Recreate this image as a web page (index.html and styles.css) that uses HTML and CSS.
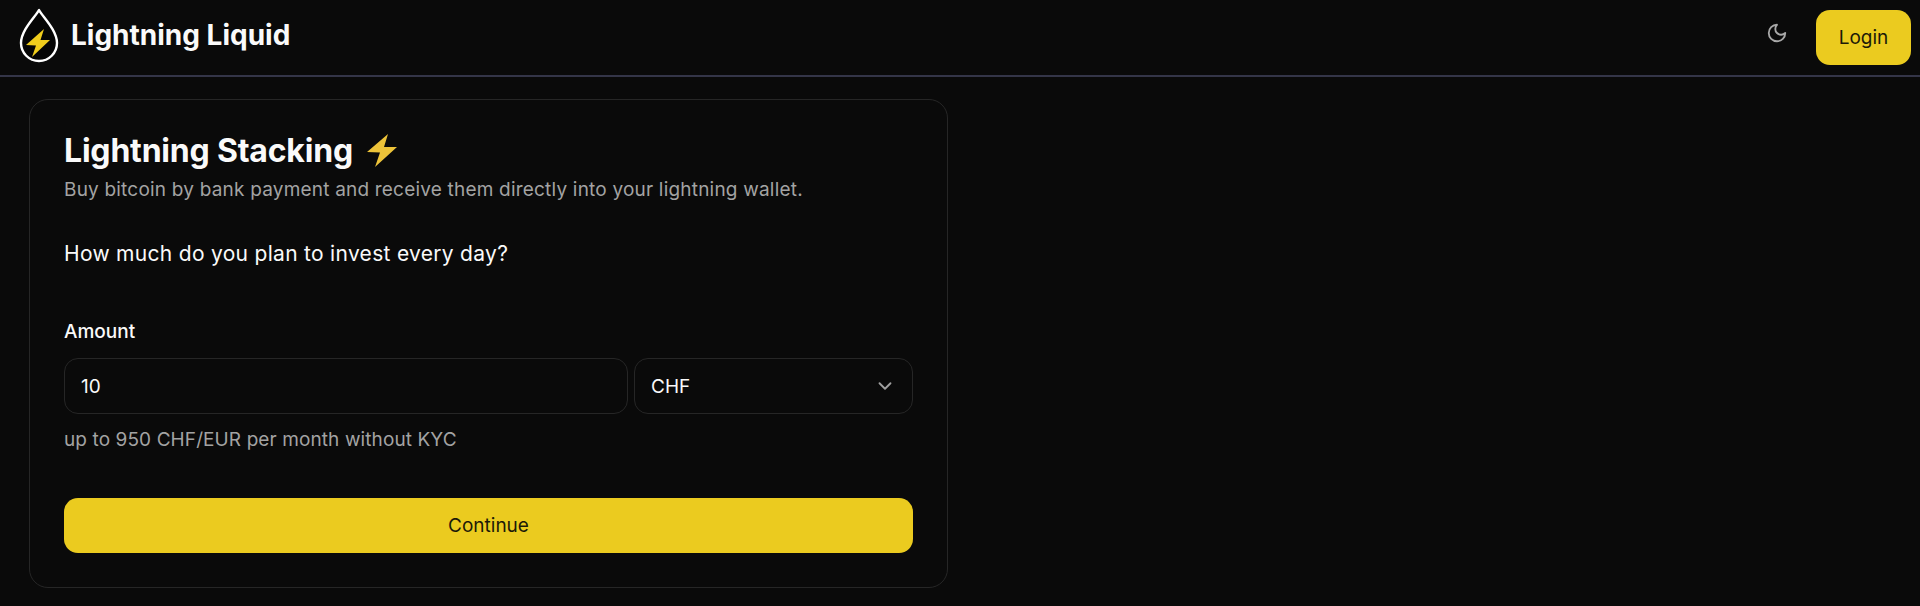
FILE: index.html
```html
<!DOCTYPE html>
<html>

<head>
    <title>Lightning Liquid</title>
    <link rel="stylesheet" href="styles.css">
</head>

<body>
    <header class="topbar">
        <div class="brand">
            <svg class="brand-logo" width="40" height="56" viewBox="0 0 40 56">
                <path d="M20 3 C17 9 2 23 2 36 A18 18 0 0 0 38 36 C38 23 23 9 20 3 Z" fill="#050505" stroke="#fff" stroke-width="2.4" stroke-linejoin="round"/>
                <path d="M25 22 L7 38 L17 38.500 L13 50 L31 33 L21.500 33 Z" fill="#f0cd1c"/>
            </svg>
            <span class="brand-name">Lightning Liquid</span>
        </div>
        <div class="actions">
            <svg class="moon" width="22" height="22" viewBox="0 0 24 24" fill="none" stroke="#a8a8a8" stroke-width="2" stroke-linecap="round" stroke-linejoin="round">
                <path d="M12 3a6 6 0 0 0 9 9 9 9 0 1 1-9-9Z"/>
            </svg>
            <button class="btn login">Login</button>
        </div>
    </header>

    <main class="card">
        <h1 class="card-title">Lightning Stacking
            <svg class="bolt" width="34" height="33" viewBox="0 0 34 33">
                <path d="M23 0 L2 18 L15 18.500 L10 33 L32 13 L19 13 Z" fill="#edc339"/>
            </svg>
        </h1>
        <p class="card-desc">Buy bitcoin by bank payment and receive them directly into your lightning wallet.</p>
        <p class="question">How much do you plan to invest every day?</p>
        <label class="field-label">Amount</label>
        <div class="field-row">
            <div class="input amount">10</div>
            <div class="input currency">
                <span>CHF</span>
                <svg width="22" height="22" viewBox="0 0 24 24" fill="none" stroke="#a0a0a0" stroke-width="2" stroke-linecap="round" stroke-linejoin="round">
                    <path d="m6 9 6 6 6-6"/>
                </svg>
            </div>
        </div>
        <p class="hint">up to 950 CHF/EUR per month without KYC</p>
        <button class="btn continue">Continue</button>
    </main>
</body>

</html>
```

FILE: styles.css
```css
* {
    box-sizing: border-box;
}

html,
body {
    height: 100%;
}

body {
    margin: 0;
    background-color: #0a0a0a;
    color: #fafafa;
    font-family: "Inter", "Liberation Sans", sans-serif;
    overflow: hidden;
}

.topbar {
    height: 77px;
    padding: 6px 9px 11px 19px;
    display: flex;
    align-items: center;
    justify-content: space-between;
    border-bottom: 2px solid #343548;
}

.brand {
    display: flex;
    align-items: center;
    gap: 12px;
}

.brand-name {
    font-size: 28px;
    font-weight: 700;
}

.actions {
    display: flex;
    align-items: center;
    gap: 28px;
}

.moon {
    margin-bottom: 4px;
}

.btn {
    border: 0;
    background-color: #ebcb1f;
    color: #1c1a08;
    font-family: inherit;
    font-weight: 400;
    font-size: 19px;
}

.login {
    width: 95px;
    height: 55px;
    margin-top: 4px;
    border-radius: 14px;
}

.card {
    width: 919px;
    height: 489px;
    margin: 22px 0 0 29px;
    padding: 29px 34px;
    border: 1px solid #262626;
    border-radius: 19px;
}

.card-title {
    margin: 0;
    display: flex;
    align-items: center;
    gap: 12px;
    height: 43px;
    font-size: 32px;
    font-weight: 650;
    letter-spacing: -0.2px;
}

.card-desc {
    margin: 5px 0 0;
    font-size: 19px;
    letter-spacing: 0.2px;
    line-height: 26px;
    color: #a3a3a3;
}

.question {
    margin: 36px 0 0;
    font-size: 21px;
    letter-spacing: 0.3px;
    line-height: 30px;
}

.field-label {
    display: block;
    margin-top: 51px;
    font-size: 19px;
    line-height: 24px;
    font-weight: 500;
}

.field-row {
    display: flex;
    gap: 6px;
    margin-top: 14px;
}

.input {
    height: 56px;
    padding: 0 16px;
    display: flex;
    align-items: center;
    justify-content: space-between;
    border: 1px solid #262626;
    border-radius: 14px;
    font-size: 19px;
}

.amount {
    flex: 1;
}

.currency {
    width: 279px;
}

.hint {
    margin: 13px 0 0;
    font-size: 19px;
    letter-spacing: 0.1px;
    line-height: 26px;
    color: #a3a3a3;
}

.continue {
    display: block;
    width: 100%;
    height: 55px;
    margin-top: 45px;
    border-radius: 14px;
}
```
